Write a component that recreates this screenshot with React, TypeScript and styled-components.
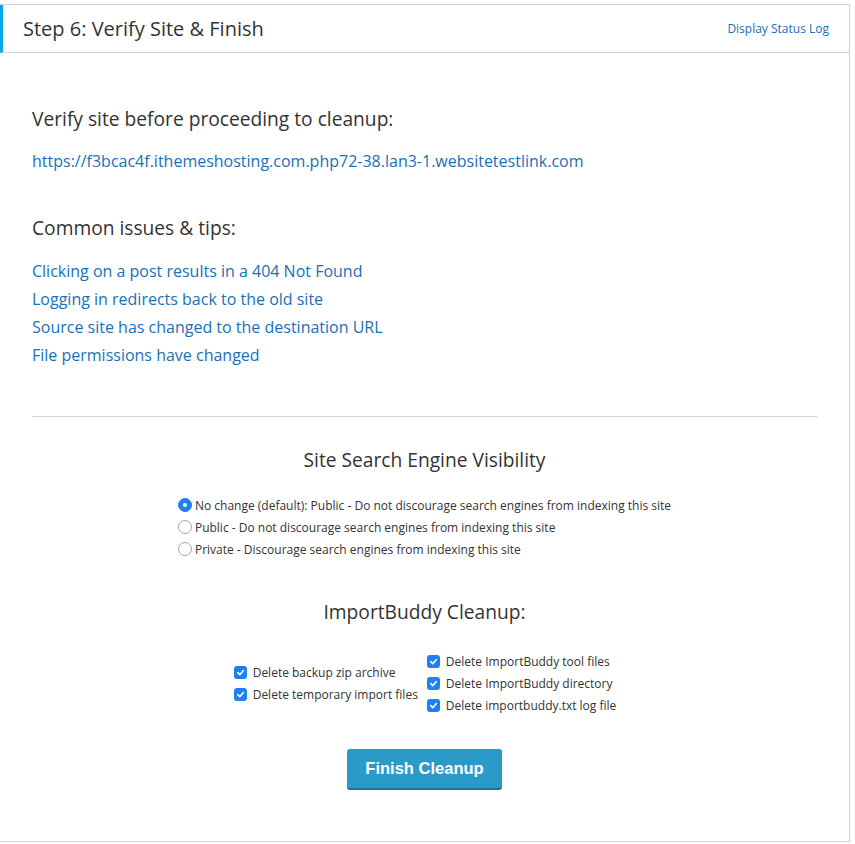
import { createGlobalStyle } from 'styled-components';
import styled from 'styled-components';

const linkBlue = '#1a70b8';
const textColor = '#333';
const controlBlue = '#1f80f2';

const GlobalStyle = createGlobalStyle`
	body {
		margin: 0;
		background: #fff;
		font-family: 'Open Sans', 'Liberation Sans', sans-serif;
		color: ${textColor};
	}
`;

const Panel = styled.div`
	margin-top: 4px;
	width: 849px;
	border: 1px solid #d2d2d2;
	border-left: none;
	background: #fff;
`;

const Header = styled.div`
	display: flex;
	align-items: center;
	justify-content: space-between;
	height: 47px;
	border-bottom: 1px solid #d2d2d2;
	border-left: 3px solid #00a6e8;
	padding: 0 20px 0 20px;
`;

const Title = styled.h2`
	margin: 0;
	font-size: 20px;
	font-weight: 400;
	color: ${textColor};
`;

const SmallLink = styled.a`
	font-size: 12px;
	color: ${linkBlue};
	text-decoration: none;
`;

const Body = styled.div`
	padding: 52px 32px 51px 32px;
`;

const Heading = styled.h3<{ $center?: boolean; $top?: number }>`
	margin: ${(p) => p.$top ?? 0}px 0 0 0;
	font-size: 19.2px;
	line-height: 28px;
	font-weight: 400;
	color: ${textColor};
	text-align: ${(p) => (p.$center ? 'center' : 'left')};
`;

const LinkList = styled.div<{ $top: number; $lh: number }>`
	margin-top: ${(p) => p.$top}px;
	display: flex;
	flex-direction: column;
	align-items: flex-start;
	line-height: ${(p) => p.$lh}px;
`;

const TextLink = styled.a`
	font-size: 16px;
	color: ${linkBlue};
	text-decoration: none;
`;

const Divider = styled.hr`
	margin: 47px 0 0 0;
	border: none;
	border-top: 1px solid #d0d0d0;
	height: 0;
`;

const CenterRow = styled.div<{ $top: number; $align?: string; $gap?: number }>`
	margin-top: ${(p) => p.$top}px;
	display: flex;
	justify-content: center;
	align-items: ${(p) => p.$align ?? 'flex-start'};
	gap: ${(p) => p.$gap ?? 0}px;
`;

const OptionList = styled.div`
	display: flex;
	flex-direction: column;
`;

const Option = styled.label`
	display: flex;
	align-items: center;
	height: 22px;
	font-size: 12px;
	color: ${textColor};
	white-space: nowrap;
`;

const RadioMark = styled.span<{ $on?: boolean }>`
	box-sizing: border-box;
	width: 14px;
	height: 14px;
	margin-right: 3px;
	border-radius: 50%;
	border: 1px solid ${(p) => (p.$on ? controlBlue : '#a6a6a6')};
	background: ${(p) => (p.$on ? controlBlue : '#fff')};
	display: flex;
	align-items: center;
	justify-content: center;
	&::after {
		content: '';
		width: 4px;
		height: 4px;
		border-radius: 50%;
		background: #fff;
		display: ${(p) => (p.$on ? 'block' : 'none')};
	}
`;

const CheckMark = styled.span`
	width: 13px;
	height: 13px;
	margin: 0 6px 0 1px;
	border-radius: 3px;
	background: ${controlBlue};
	display: flex;
	align-items: center;
	justify-content: center;
`;

const Button = styled.button`
	margin-top: 33px;
	width: 155px;
	height: 41px;
	border: none;
	border-bottom: 2px solid #1e7199;
	border-radius: 3px;
	background: #2a9ac8;
	color: #fff;
	font-family: 'Liberation Sans', Arial, sans-serif;
	font-size: 16.5px;
	font-weight: 700;
	cursor: pointer;
`;

const Tick = () => (
	<svg width="9" height="9" viewBox="0 0 10 10">
		<path d="M2 5.2 L4.2 7.4 L8.2 2.8" fill="none" stroke="#fff" strokeWidth="1.8" strokeLinecap="round" strokeLinejoin="round" />
	</svg>
);

const tips = [
	'Clicking on a post results in a 404 Not Found',
	'Logging in redirects back to the old site',
	'Source site has changed to the destination URL',
	'File permissions have changed'
];

const visibility = [
	'No change (default): Public - Do not discourage search engines from indexing this site',
	'Public - Do not discourage search engines from indexing this site',
	'Private - Discourage search engines from indexing this site'
];

const leftChecks = ['Delete backup zip archive', 'Delete temporary import files'];
const rightChecks = ['Delete ImportBuddy tool files', 'Delete ImportBuddy directory', 'Delete importbuddy.txt log file'];

const App: React.FC = () => {
	return (
		<>
			<GlobalStyle />
			<Panel>
				<Header>
					<Title>Step 6: Verify Site &amp; Finish</Title>
					<SmallLink href="#">Display Status Log</SmallLink>
				</Header>
				<Body>
					<Heading>Verify site before proceeding to cleanup:</Heading>
					<LinkList $top={16} $lh={24}>
						<TextLink href="#">https://f3bcac4f.ithemeshosting.com.php72-38.lan3-1.websitetestlink.com</TextLink>
					</LinkList>
					<Heading $top={41}>Common issues &amp; tips:</Heading>
					<LinkList $top={15} $lh={28}>
						{tips.map((t) => (
							<TextLink key={t} href="#">
								{t}
							</TextLink>
						))}
					</LinkList>
					<Divider />
					<Heading $center $top={29}>
						Site Search Engine Visibility
					</Heading>
					<CenterRow $top={20}>
						<OptionList>
							{visibility.map((v, i) => (
								<Option key={v}>
									<RadioMark $on={i === 0} />
									{v}
								</Option>
							))}
						</OptionList>
					</CenterRow>
					<Heading $center $top={38}>
						ImportBuddy Cleanup:
					</Heading>
					<CenterRow $top={24} $align="center" $gap={8}>
						<OptionList>
							{leftChecks.map((c) => (
								<Option key={c}>
									<CheckMark>
										<Tick />
									</CheckMark>
									{c}
								</Option>
							))}
						</OptionList>
						<OptionList>
							{rightChecks.map((c) => (
								<Option key={c}>
									<CheckMark>
										<Tick />
									</CheckMark>
									{c}
								</Option>
							))}
						</OptionList>
					</CenterRow>
					<CenterRow $top={0}>
						<Button>Finish Cleanup</Button>
					</CenterRow>
				</Body>
			</Panel>
		</>
	);
};

export default App;
